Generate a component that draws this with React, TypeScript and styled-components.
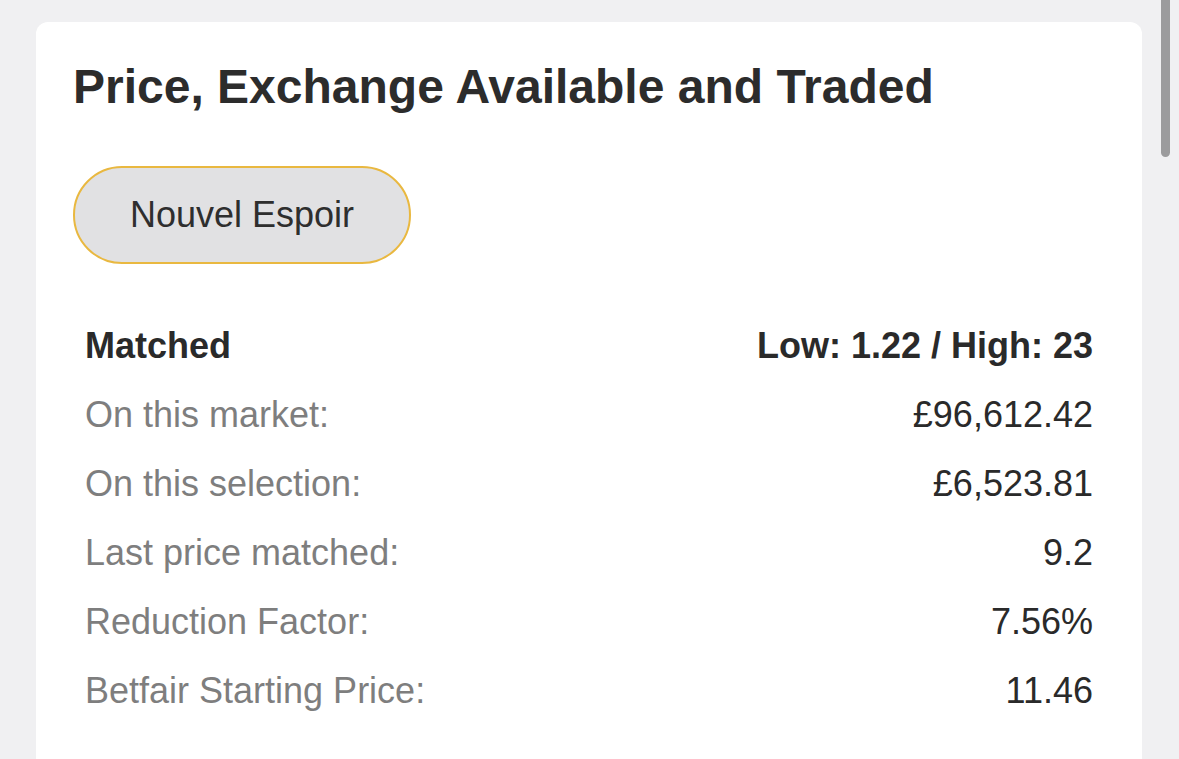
import React from "react";
import styled, { createGlobalStyle } from "styled-components";

const Global = createGlobalStyle`
  html, body { margin: 0; padding: 0; background: #f0f0f2; }
  body { font-family: "Liberation Sans", Arial, sans-serif; overflow: hidden; }
`;

const Page = styled.div`
  height: 759px;
  padding: 22px 37px 0 36px;
  box-sizing: border-box;
  position: relative;
`;

const Card = styled.section`
  background: #ffffff;
  border-radius: 12px 12px 0 0;
  height: 737px;
  padding: 37px 49px 0 37px;
  box-sizing: border-box;
`;

const Title = styled.h1`
  margin: 0;
  font-size: 48px;
  font-weight: 700;
  color: #2c2c2c;
  line-height: 55px;
`;

const Pill = styled.button`
  margin-top: 52px;
  width: 338px;
  height: 98px;
  border-radius: 49px;
  border: 2.5px solid #e9b840;
  background: #e1e1e3;
  color: #2e2e2e;
  font-family: "Liberation Sans", Arial, sans-serif;
  font-size: 36px;
  padding: 0;
  display: flex;
  align-items: center;
  justify-content: center;
  box-sizing: border-box;
`;

const Table = styled.div`
  margin: 47px 0 0 12px;
  display: flex;
  flex-direction: column;
`;

const Row = styled.div<{ $head?: boolean }>`
  display: flex;
  justify-content: space-between;
  align-items: center;
  height: 69px;
  font-size: 36px;
  color: ${(p) => (p.$head ? "#2a2a2a" : "#7e7e7e")};
  font-weight: ${(p) => (p.$head ? 700 : 400)};
`;

const Value = styled.span`
  color: #2a2a2a;
`;

const Scrollbar = styled.div`
  position: absolute;
  top: 0;
  right: 9px;
  width: 9px;
  height: 157px;
  border-radius: 0 0 5px 5px;
  background: #9b9b9d;
`;

const rows: [string, string][] = [
  ["On this market:", "£96,612.42"],
  ["On this selection:", "£6,523.81"],
  ["Last price matched:", "9.2"],
  ["Reduction Factor:", "7.56%"],
  ["Betfair Starting Price:", "11.46"],
];

export default function App() {
  return (
    <>
      <Global />
      <Page>
        <Card>
          <Title>Price, Exchange Available and Traded</Title>
          <Pill>Nouvel Espoir</Pill>
          <Table>
            <Row $head>
              <span>Matched</span>
              <span>Low: 1.22 / High: 23</span>
            </Row>
            {rows.map(([l, v]) => (
              <Row key={l}>
                <span>{l}</span>
                <Value>{v}</Value>
              </Row>
            ))}
          </Table>
        </Card>
        <Scrollbar />
      </Page>
    </>
  );
}
